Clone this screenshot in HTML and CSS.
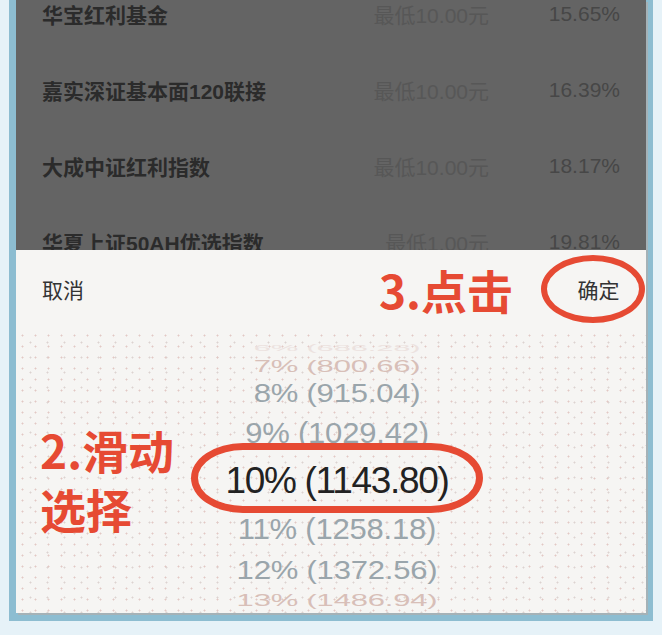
FILE: index.html
```html
<!DOCTYPE html>
<html lang="zh-CN">
<head>
<meta charset="UTF-8">
<meta name="viewport" content="width=device-width, initial-scale=1.0">
<title>定投收益选择</title>
<link rel="stylesheet" href="styles.css">
</head>
<body>
    <div class="device">
        <div class="screen">
            <!-- fund list, dimmed behind the sheet -->
            <div class="fund-list">
                <div class="fund-rows">
                    <div class="fund-row">
                        <span class="fund-name">华宝红利基金</span>
                        <span class="fund-min">最低10.00元</span>
                        <span class="fund-rate">15.65%</span>
                    </div>
                    <div class="fund-row">
                        <span class="fund-name">嘉实深证基本面120联接</span>
                        <span class="fund-min">最低10.00元</span>
                        <span class="fund-rate">16.39%</span>
                    </div>
                    <div class="fund-row">
                        <span class="fund-name">大成中证红利指数</span>
                        <span class="fund-min">最低10.00元</span>
                        <span class="fund-rate">18.17%</span>
                    </div>
                    <div class="fund-row">
                        <span class="fund-name">华夏上证50AH优选指数</span>
                        <span class="fund-min">最低1.00元</span>
                        <span class="fund-rate">19.81%</span>
                    </div>
                </div>
            </div>

            <!-- picker sheet -->
            <div class="sheet">
                <div class="sheet-header">
                    <span class="sheet-btn">取消</span>
                    <span class="spacer"></span>
                    <span class="note note-click">3.点击</span>
                    <span class="sheet-btn confirm">确定</span>
                </div>
                <div class="picker">
                    <div class="note note-slide">2.滑动<br>选择</div>
                    <div class="pick-row far2">6% (686.28)</div>
                    <div class="pick-row far">7% (800.66)</div>
                    <div class="pick-row mid">8% (915.04)</div>
                    <div class="pick-row near">9% (1029.42)</div>
                    <div class="pick-row current">10% (1143.80)</div>
                    <div class="pick-row near">11% (1258.18)</div>
                    <div class="pick-row mid mid-low">12% (1372.56)</div>
                    <div class="pick-row far far-low">13% (1486.94)</div>
                </div>
            </div>
        </div>
    </div>
</body>
</html>
```

FILE: styles.css
```css
body, html {
    margin: 0;
    padding: 0;
    height: 100%;
    overflow: hidden;
}
body {
    background-color: #e6f2f8;
    font-family: "Liberation Sans", "Noto Sans CJK SC", sans-serif;
}
.device {
    margin-left: 9px;
    width: 630px;
    border-left: 7px solid #8dbdd1;
    border-right: 7px solid #8dbdd1;
    border-bottom: 8px solid #8dbdd1;
}
.screen {
    height: 613px;
    display: flex;
    flex-direction: column;
    overflow: hidden;
    box-shadow: 2px 2px 0 #a5b2b7;
}

/* Fund list under overlay */
.fund-list {
    height: 250px;
    background-color: #646464;
    overflow: hidden;
}
.fund-rows {
    margin-top: -24px;
}
.fund-row {
    height: 76px;
    display: flex;
    align-items: center;
    padding: 0 26px;
    font-size: 21px;
}
.fund-name {
    flex: 1;
    font-weight: bold;
    color: #2b2b2b;
}
.fund-min {
    color: #575757;
}
.fund-rate {
    width: 131px;
    text-align: right;
    color: #474747;
}

/* Bottom sheet */
.sheet {
    flex: 1;
    display: flex;
    flex-direction: column;
    background-color: #f6f5f3;
}
.sheet-header {
    height: 78px;
    display: flex;
    align-items: center;
    padding: 0 1px 2px 26px;
}
.sheet-btn {
    font-size: 21px;
    color: #333;
    font-family: "Noto Sans CJK SC", sans-serif;
}
.spacer {
    flex: 1;
}
.note {
    font-family: "Noto Sans CJK SC", sans-serif;
    font-weight: bold;
    font-size: 46px;
    color: #e64a33;
}
.note-click {
    line-height: 1;
    margin-right: 28px;
}
.confirm {
    box-sizing: border-box;
    width: 104px;
    height: 68px;
    border: 6px solid #e64a33;
    border-radius: 50%;
    display: flex;
    align-items: center;
    justify-content: center;
    padding-left: 11px;
}

/* Wheel picker */
.picker {
    flex: 1;
    position: relative;
    padding: 11px 0 0 12px;
    background-image:
        radial-gradient(circle, #e2c8c4 0.8px, transparent 1.2px),
        radial-gradient(circle, #dcd3d0 0.8px, transparent 1.2px);
    background-size: 13px 11px, 17px 15px;
    background-position: 0 0, 6px 5px;
}
.note-slide {
    position: absolute;
    left: 24px;
    top: 90px;
    line-height: 59px;
}
.pick-row {
    display: flex;
    justify-content: center;
    align-items: center;
    font-size: 31px;
    letter-spacing: -0.2px;
    color: #9aa5ab;
    white-space: nowrap;
}
.far2 {
    height: 14px;
    color: #ece2df;
    transform: scaleY(0.3);
}
.far {
    height: 22px;
    color: #d8bfb8;
    transform: scaleY(0.55);
}
.far-low {
    height: 19px;
}
.mid {
    height: 33px;
    transform: scaleY(0.84);
}
.mid-low {
    height: 40px;
}
.near {
    height: 45px;
    transform: scaleY(0.97);
}
.current {
    height: 51px;
    position: relative;
    font-size: 37px;
    letter-spacing: -1.3px;
    color: #222;
}
.current::after {
    content: "";
    position: absolute;
    left: 50%;
    top: -12px;
    width: 292px;
    height: 70px;
    margin-left: -146px;
    box-sizing: border-box;
    border: 7px solid #e64a33;
    border-radius: 52px / 35px;
}
```
